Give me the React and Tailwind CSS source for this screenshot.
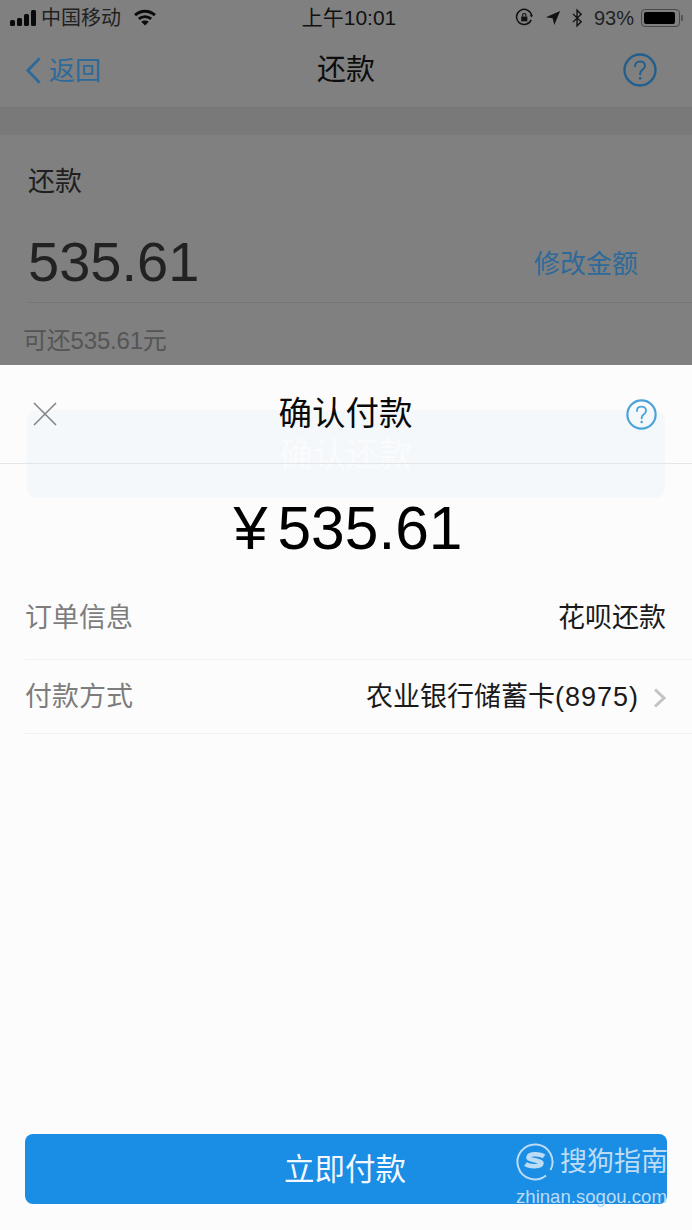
const font = "font-['Liberation_Sans','Noto_Sans_CJK_SC',sans-serif]";

function HelpIcon({ className }) {
  return (
    <svg viewBox="0 0 34 34" fill="none" className={className}>
      <circle cx="17" cy="17" r="15.5" stroke="currentColor" strokeWidth="2.4" />
      <path d="M12 13.2c0-3 2.2-4.8 5-4.8s5 1.800 5 4.400c0 2-1.200 3-2.700 4.100-1.400 1-2.100 1.900-2.100 3.600v.8" stroke="currentColor" strokeWidth="2" strokeLinecap="round" />
      <circle cx="17.200" cy="25.300" r="1.400" fill="currentColor" />
    </svg>
  );
}

function StatusBar() {
  return (
    <div className="h-[35px] flex items-center justify-between pl-[10px] pr-[9px] text-[#111] relative">
      <div className="flex items-center">
        <div className="flex items-end gap-[2px] h-[16px]">
          <div className="w-[5px] h-[6px] bg-[#0a0a0a] rounded-[1.5px]" />
          <div className="w-[5px] h-[8px] bg-[#0a0a0a] rounded-[1.5px]" />
          <div className="w-[5px] h-[12px] bg-[#0a0a0a] rounded-[1.5px]" />
          <div className="w-[5px] h-[16px] bg-[#0a0a0a] rounded-[1.5px]" />
        </div>
        <span className="ml-[5px] text-[20px] leading-none text-[#222]">中国移动</span>
        <svg viewBox="0 0 24 18" className="ml-[12px] w-[24px] h-[17px]" fill="none" stroke="#0a0a0a" strokeWidth="3">
          <path d="M1.500 6.500C7.500 1 16.500 1 22.500 6.500" />
          <path d="M5.500 10.500c3.800-3.300 9.200-3.300 13 0" />
          <path d="M12 17.500l-4-4c2.300-1.700 5.700-1.700 8 0z" fill="#0a0a0a" stroke="none" />
        </svg>
      </div>
      <span className="absolute left-0 right-0 pl-[6px] text-center text-[21px] leading-none text-[#111] pointer-events-none">上午10:01</span>
      <div className="flex items-center">
        <svg viewBox="0 0 20 20" className="w-[19px] h-[19px]" fill="none" stroke="#111" strokeWidth="1.600">
          <path d="M17 12.500A8 8 0 1 1 17.500 8" />
          <path d="M15.500 7.500h3.500l-1.800 2.400z" fill="#111" stroke="none" />
          <rect x="6.500" y="9" width="6.500" height="5" fill="#111" stroke="none" />
          <path d="M8 9V7.500a1.700 1.700 0 0 1 3.500 0V9" strokeWidth="1.200" />
        </svg>
        <svg viewBox="0 0 18 18" className="ml-[11px] w-[16px] h-[16px]">
          <path d="M17 1L1 8.200l7.600 1.200L10.500 17z" fill="#111" />
        </svg>
        <svg viewBox="0 0 12 20" className="ml-[11px] w-[11px] h-[20px]" fill="none" stroke="#111" strokeWidth="1.500">
          <path d="M1 5.500l9 8.500-4.500 4.500V1.500L10 6l-9 8.500" />
        </svg>
        <span className="ml-[11px] text-[20px] leading-none text-[#222]">93%</span>
        <div className="ml-[7px] w-[39px] h-[18px] border border-[#4a4a4a] rounded-[4px] p-[2px]">
          <div className="w-[31px] h-full bg-black rounded-[2px]" />
        </div>
        <div className="ml-[1px] w-[2px] h-[6px] bg-[#555] rounded-r-[1px]" />
      </div>
    </div>
  );
}

function PageBehind() {
  return (
    <div className="h-[365px] overflow-hidden bg-[#808080]">
      <StatusBar />
      <div className="h-[73px] pb-[2px] flex items-center justify-between pl-[25px] pr-[35px] relative border-b border-[#787878]">
        <div className="flex items-center text-[#2e6a99]">
          <svg viewBox="0 0 18 30" className="w-[17px] h-[29px]" fill="none" stroke="currentColor" strokeWidth="3">
            <path d="M15.500 2L3 15l12.500 13" />
          </svg>
          <span className="ml-[7px] mt-[1px] text-[26px] leading-none">返回</span>
        </div>
        <span className="absolute left-0 right-0 mt-[1px] text-center text-[29px] leading-none text-[#0d0d0d]">还款</span>
        <HelpIcon className="w-[34px] h-[34px] text-[#245f8c]" />
      </div>
      <div className="h-[27px] bg-[#797979]" />
      <div className="pl-[28px] pt-[34px]">
        <div className="text-[27px] leading-none text-[#1f1f1f]">还款</div>
        <div className="mt-[34px] pb-[8px] flex items-center justify-between pr-[54px] border-b border-[#767676]">
          <span className="text-[56px] leading-[64px] text-[#222]">535.61</span>
          <span className="mt-[3px] text-[26px] leading-none text-[#2e6a99]">修改金额</span>
        </div>
        <div className="-ml-[5px] mt-[26px] text-[24px] leading-none text-[#555] tracking-[-0.2px]">可还535.61元</div>
      </div>
    </div>
  );
}

function Row({ label, children, className }) {
  return (
    <div className={`relative ml-[25px] pr-[26px] flex items-center justify-between border-b border-[#f0f0f0] ${className}`}>
      <span className="text-[27px] leading-none text-[#7d7d7d]">{label}</span>
      {children}
    </div>
  );
}

function Sheet() {
  return (
    <div className="relative h-[865px] bg-[#fcfcfc] flex flex-col">
      {/* the fading button of the page behind */}
      <div className="absolute left-[27px] top-[45px] w-[638px] h-[88px] rounded-[10px] bg-[#f4f8fb] flex items-center justify-center">
        <span className="text-[33px] leading-none text-[#fafbfd] blur-[0.5px]">确认还款</span>
      </div>
      <div className="relative h-[99px] flex items-center justify-between pl-[33px] pr-[35px] border-b border-[#e3e5e7]">
        <svg viewBox="0 0 24 24" className="w-[24px] h-[24px]" fill="none" stroke="#808080" strokeWidth="1.500">
          <path d="M1 1l22 22M23 1L1 23" />
        </svg>
        <span className="absolute left-0 right-[1px] text-center text-[33.500px] leading-none text-[#0a0a0a]">确认付款</span>
        <HelpIcon className="w-[31px] h-[31px] text-[#4ba3da]" />
      </div>
      <div className="relative h-[114px] pt-[14px] pl-[4px] flex items-center justify-center text-black">
        <span className="text-[61px] leading-none">¥</span>
        <span className="ml-[10px] text-[60.500px] leading-none">535.61</span>
      </div>
      <Row label="订单信息" className="h-[82px]">
        <span className="text-[27px] leading-none text-[#1a1a1a]">花呗还款</span>
      </Row>
      <Row label="付款方式" className="h-[74px] pt-[2px]">
        <div className="flex items-center">
          <span className="text-[27px] leading-none text-[#1a1a1a]">农业银行储蓄卡<span className="tracking-[1px]">(8975)</span></span>
          <svg viewBox="0 0 13 20" className="ml-[14px] w-[13px] h-[20px]" fill="none" stroke="#c4c4c4" strokeWidth="3">
            <path d="M2 1.500L11 10l-9 8.500" />
          </svg>
        </div>
      </Row>
      <div className="mt-auto mb-[26px] mx-[25px] h-[70px] rounded-[8px] bg-[#1a8de4] flex items-center justify-center relative">
        <span className="mt-[1px] mr-[2px] text-[30.500px] leading-none text-[#f2f8fd]">立即付款</span>
        {/* watermark */}
        <div className="absolute -right-[2px] top-[9px] w-[153px] text-[#bcdcf6]">
          <div className="flex items-center">
            <svg viewBox="0 0 38 38" className="w-[38px] h-[38px]" fill="none">
              <path d="M30 32.500A17.500 17.500 0 1 1 34.500 27" stroke="currentColor" strokeWidth="2" />
              <path d="M28 13.500c-3.500-2.500-14-3.500-15.500.5-1.200 3.500 13.500 3 13 6.500-.5 3.500-12 3.500-16 .5" stroke="currentColor" strokeWidth="4.500" />
            </svg>
            <span className="ml-[6px] text-[27px] leading-none whitespace-nowrap">搜狗指南</span>
          </div>
          <div className="mt-[7px] text-[18.600px] leading-none whitespace-nowrap">zhinan.sogou.com</div>
        </div>
      </div>
    </div>
  );
}

export default function App() {
  return (
    <div className={`w-[692px] h-[1230px] overflow-hidden ${font}`}>
      <PageBehind />
      <Sheet />
    </div>
  );
}
